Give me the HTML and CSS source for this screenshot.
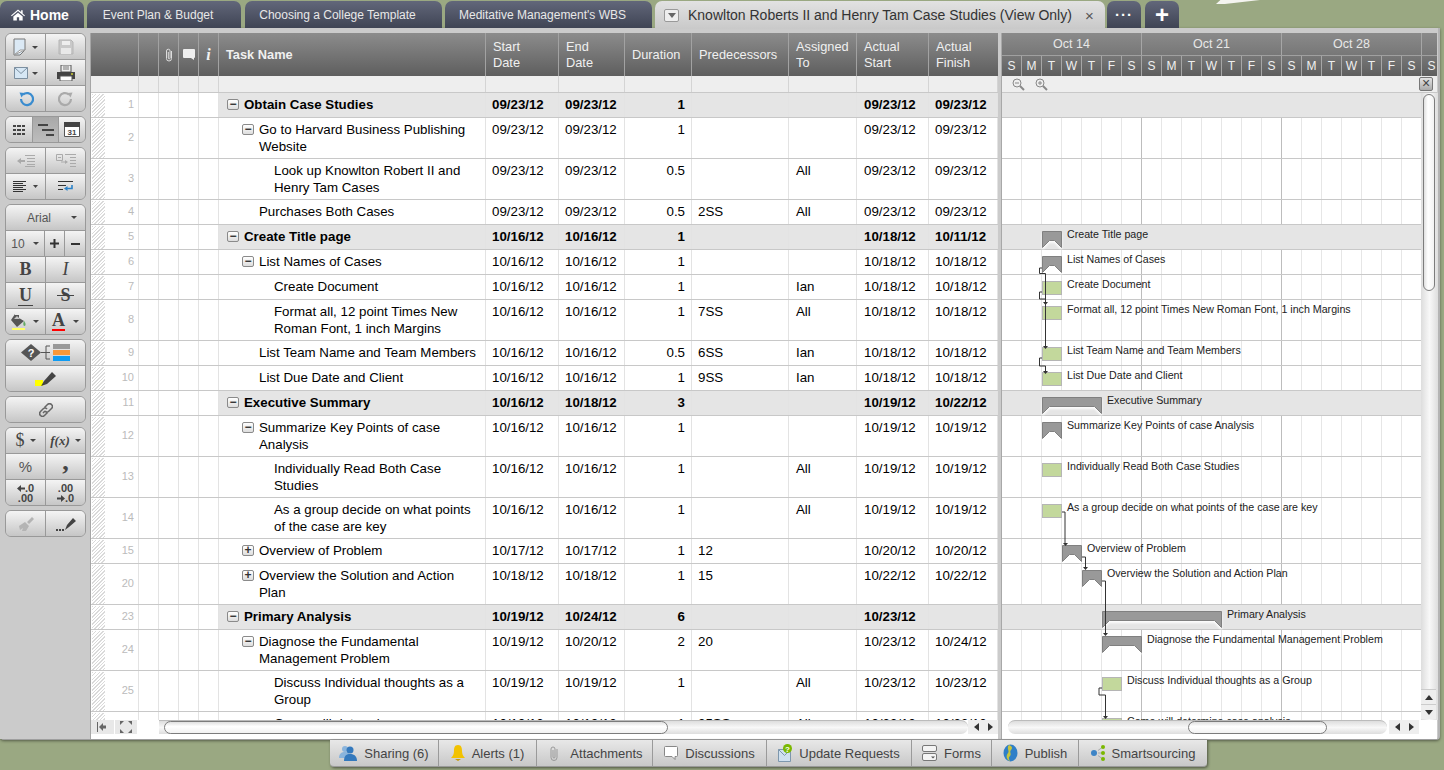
FILE: index.html
```html
<!DOCTYPE html>
<html lang="en">
<head>
<meta charset="utf-8">
<title>Knowlton Roberts II and Henry Tam Case Studies</title>
<link rel="stylesheet" href="styles.css">
</head>
<body>
<div class="corner-logo"></div>
<nav class="tabs">
  <div class="tab home"><svg width="14" height="12" viewBox="0 0 18 14"><path d="M9 0 0 7.500l1 1L9 2l8 6.500 1-1-3-2.500V1h-2v2.300zM3 9v5h4.500v-4h3v4H15V9L9 4z" fill="#fff"/></svg>Home</div>
  <div class="tab w154">Event Plan &amp; Budget</div>
  <div class="tab w197">Choosing a College Template</div>
  <div class="tab w207">Meditative Management's WBS</div>
  <div class="tab active"><span class="tab-menu"><svg width="8" height="5" viewBox="0 0 8 5"><path d="M0 0h8L4 5z" fill="#666"/></svg></span><span class="tab-title">Knowlton Roberts II and Henry Tam Case Studies (View Only)</span><span class="tab-x">×</span></div>
  <div class="tab more">···</div>
  <div class="tab plus">+</div>
</nav>

<main class="app">
  <aside class="toolbar">
    <div class="tg">
      <div class="tr">
        <div class="tb"><svg width="26" height="18" viewBox="0 0 26 18"><path d="M1 1h11v11l-5 5H1z" fill="#dbe9f5" stroke="#777"/><path d="M1 17l6-5 5 0z" fill="#fff" stroke="#999"/><path d="M19 8h6l-3 3z" fill="#444"/></svg></div>
        <div class="tb"><svg width="16" height="16" viewBox="0 0 16 16"><path d="M1 1h12l2 2v12H1z" fill="#c9c9c9" stroke="#b5b5b5"/><path d="M4 2h8v4H4z" fill="#eee"/><path d="M3 9h10v6H3z" fill="#e8e8e8"/></svg></div>
      </div>
      <div class="tr">
        <div class="tb"><svg width="24" height="12" viewBox="0 0 24 12"><path d="M.5.500h13v11H.5z" fill="#d6e7f5" stroke="#7c8fa0"/><path d="M.5.500l6.500 6 6.500-6" fill="none" stroke="#7c8fa0"/><path d="M18 5h6l-3 3z" fill="#444"/></svg></div>
        <div class="tb"><svg width="18" height="16" viewBox="0 0 18 16"><path d="M4 0h10v7H4z" fill="#eee" stroke="#555"/><path d="M6 2h6M6 4h6" stroke="#777"/><path d="M0 7h18v7H0z" fill="#444"/><path d="M3 11h12v5H3z" fill="#fff" stroke="#555"/><circle cx="15" cy="9" r="1" fill="#cc3"/></svg></div>
      </div>
      <div class="tr">
        <div class="tb"><svg width="16" height="16" viewBox="0 0 16 16"><path d="M3 8a6 6 0 1 0 2-4.400" fill="none" stroke="#3a8ccf" stroke-width="2.200"/><path d="M1.500 1.500l5 .5-3 4.500z" fill="#3a8ccf"/></svg></div>
        <div class="tb"><svg width="16" height="16" viewBox="0 0 16 16"><path d="M13 8a6 6 0 1 1-2-4.400" fill="none" stroke="#aaa" stroke-width="2.200"/><path d="M14.500 1.500l-5 .5 3 4.500z" fill="#aaa"/></svg></div>
      </div>
    </div>
    <div class="tg">
      <div class="tr">
        <div class="tb"><svg width="12" height="10" viewBox="0 0 12 10"><path d="M0 0h3v2H0zM4 0h4v2H4zM9 0h3v2H9zM0 4h3v2H0zM4 4h4v2H4zM9 4h3v2H9zM0 8h3v2H0zM4 8h4v2H4zM9 8h3v2H9z" fill="#444"/></svg></div>
        <div class="tb on"><svg width="16" height="12" viewBox="0 0 16 12"><path d="M0 0h10v2H0zM4 5h12v2H4zM8 10h8v2H8z" fill="#444"/></svg></div>
        <div class="tb"><svg width="16" height="15" viewBox="0 0 16 15"><path d="M.5 2.500h15v12H.5z" fill="#fff" stroke="#555"/><path d="M0 0h16v5H0z" fill="#444"/><text x="8" y="13" text-anchor="middle" class="ico-t">31</text></svg></div>
      </div>
    </div>
    <div class="tg">
      <div class="tr">
        <div class="tb dim"><svg width="18" height="12" viewBox="0 0 18 12"><path d="M8 .5h10M10 3.500h8M10 6.500h8M10 9.500h8M8 11.500h10" stroke="#aaa"/><path d="M0 6l4-3v2h4v2H4v2z" fill="#aaa"/></svg></div>
        <div class="tb dim"><svg width="20" height="14" viewBox="0 0 20 14"><path d="M.5.500h6v6h-6z" fill="none" stroke="#aaa"/><path d="M2 3.500h3M9 .5h11M14 3.500h6M14 6.500h6M14 9.500h6M14 12.500h6" stroke="#aaa"/><path d="M12 8l-3-2v1.500H5v1h4V10z" fill="#aaa"/></svg></div>
      </div>
      <div class="tr">
        <div class="tb"><svg width="26" height="11" viewBox="0 0 26 11"><path d="M0 .5h13M0 2.500h10M0 4.500h13M0 6.500h10M0 8.500h13M0 10.500h10" stroke="#333"/><path d="M20 4h5l-2.500 3z" fill="#444"/></svg></div>
        <div class="tb"><svg width="16" height="12" viewBox="0 0 16 12"><path d="M0 .5h15M0 4.500h8M0 8.500h5" stroke="#333"/><path d="M14 4v3.500H9" fill="none" stroke="#2a82c9" stroke-width="1.600"/><path d="M6 7.500l3.500-2.500v5z" fill="#2a82c9"/></svg></div>
      </div>
    </div>
    <div class="tg">
      <div class="tr"><div class="tb txt font">Arial<i class="dd"></i></div></div>
      <div class="tr">
        <div class="tb txt size">10<i class="dd"></i></div>
        <div class="tb half"><svg width="9" height="9" viewBox="0 0 9 9"><path d="M3.500 0h2v3.500H9v2H5.500V9h-2V5.500H0v-2h3.500z" fill="#333"/></svg></div>
        <div class="tb half"><svg width="9" height="2" viewBox="0 0 9 2"><path d="M0 0h9v2H0z" fill="#333"/></svg></div>
      </div>
      <div class="tr">
        <div class="tb serif"><b>B</b></div>
        <div class="tb serif"><em>I</em></div>
      </div>
      <div class="tr">
        <div class="tb serif"><b class="ul">U</b></div>
        <div class="tb serif"><b class="st">S</b></div>
      </div>
      <div class="tr">
        <div class="tb fill"><span class="stack"><svg width="15" height="13" viewBox="0 0 15 13"><path d="M4 0 0 6l6 7 7-6-5-3V1H4z" fill="#555"/><path d="M3 5l3-3 3 3z" fill="#c4c4c4"/><path d="M13 7c2 2 2 5 .5 5S12 9 13 7" fill="#6a6"/></svg><i class="sw yellow"></i></span><i class="dd"></i></div>
        <div class="tb fill"><span class="stack serif-a"><b>A</b><i class="sw red"></i></span><i class="dd"></i></div>
      </div>
    </div>
    <div class="tg">
      <div class="tr">
        <div class="tb"><svg width="50" height="17" viewBox="0 0 50 17"><path d="M10 0l10 8.500L10 17 0 8.500z" fill="#555"/><text x="10" y="12.500" text-anchor="middle" class="ico-q">?</text><path d="M20 8.500h6M25 2v13M25 2h4M25 8.500h4M25 15h4" stroke="#555" fill="none"/><path d="M32 0h17v5H32z" fill="#999"/><path d="M32 6h17v5H32z" fill="#f7983a"/><path d="M32 12h17v5H32z" fill="#0f9bf2"/></svg></div>
      </div>
      <div class="tr">
        <div class="tb"><svg width="22" height="16" viewBox="0 0 22 16"><path d="M0 9h8v6H0z" fill="#ff0"/><path d="M6 15l3-5 8-9 4 4-9 8z" fill="#444"/></svg></div>
      </div>
    </div>
    <div class="tg">
      <div class="tr">
        <div class="tb"><svg width="14" height="14" viewBox="0 0 14 14"><path d="M6 8 4 10M5.500 4.500l3-3a2.400 2.400 0 0 1 4 4l-3 3a2.400 2.400 0 0 1-3.500-.5M8.500 9.500l-3 3a2.400 2.400 0 0 1-4-4l3-3a2.400 2.400 0 0 1 3.500.5" fill="none" stroke="#666" stroke-width="1.500"/></svg></div>
      </div>
    </div>
    <div class="tg">
      <div class="tr">
        <div class="tb serif sm">$<i class="dd"></i></div>
        <div class="tb serif sm fx"><em>f(x)</em><i class="dd"></i></div>
      </div>
      <div class="tr">
        <div class="tb txt pct">%</div>
        <div class="tb serif sm comma"><b>,</b></div>
      </div>
      <div class="tr">
        <div class="tb deci"><span><svg width="8" height="7" viewBox="0 0 8 7"><path d="M0 3.500 4 0v2.500h4v2H4V7z" fill="#444"/></svg>.0<br>.00</span></div>
        <div class="tb deci"><span>.00<br><svg width="8" height="7" viewBox="0 0 8 7"><path d="M8 3.500 4 0v2.500H0v2h4V7z" fill="#444"/></svg>.0</span></div>
      </div>
    </div>
    <div class="tg">
      <div class="tr">
        <div class="tb"><svg width="16" height="14" viewBox="0 0 16 14"><path d="M9 5l5-5 2 2-5 5zM1 9l6-4 4 4-3 5H4l1-3-3 2z" fill="#b4b4b4"/></svg></div>
        <div class="tb"><svg width="20" height="14" viewBox="0 0 20 14"><path d="M0 12h2v2H0zM3 12h2v2H3zM6 12h2v2H6zM9 13l2-5 6-7 3 3-7 6z" fill="#444"/></svg></div>
      </div>
    </div>
  </aside>

  <section class="grid-pane">
    <div class="row head">
      <div class="c"></div><div class="c"></div>
      <div class="c ic"><svg width="8" height="14" viewBox="0 0 8 14"><path d="M6.500 3v7.500a2.500 2.500 0 0 1-5 0V3a1.800 1.800 0 0 1 3.600 0v7a.9.9 0 0 1-1.800 0V4" fill="none" stroke="#ddd"/></svg></div>
      <div class="c ic"><svg width="12" height="11" viewBox="0 0 12 11"><path d="M1 0h10a1 1 0 0 1 1 1v7a1 1 0 0 1-1 1v2L8 9H1a1 1 0 0 1-1-1V1a1 1 0 0 1 1-1" fill="#eee"/></svg></div>
      <div class="c ic info">i</div>
      <div class="c h-task">Task Name</div>
      <div class="c">Start<br>Date</div><div class="c">End<br>Date</div><div class="c">Duration</div><div class="c">Predecessors</div><div class="c">Assigned<br>To</div><div class="c">Actual<br>Start</div><div class="c">Actual<br>Finish</div>
    </div>
    <div class="row filter"><div class="c"></div><div class="c"></div><div class="c"></div><div class="c"></div><div class="c"></div><div class="c"></div><div class="c"></div><div class="c"></div><div class="c"></div><div class="c"></div><div class="c"></div><div class="c"></div><div class="c"></div></div>
    <div class="grid-body">
      <div class="row sum"><div class="c n"><i></i>1</div><div class="c"></div><div class="c"></div><div class="c"></div><div class="c"></div><div class="c task l0"><b class="tog">−</b><span>Obtain Case Studies</span></div><div class="c">09/23/12</div><div class="c">09/23/12</div><div class="c r">1</div><div class="c"></div><div class="c"></div><div class="c">09/23/12</div><div class="c">09/23/12</div></div>
      <div class="row tall"><div class="c n"><i></i>2</div><div class="c"></div><div class="c"></div><div class="c"></div><div class="c"></div><div class="c task l1"><b class="tog">−</b><span>Go to Harvard Business Publishing Website</span></div><div class="c">09/23/12</div><div class="c">09/23/12</div><div class="c r">1</div><div class="c"></div><div class="c"></div><div class="c">09/23/12</div><div class="c">09/23/12</div></div>
      <div class="row tall"><div class="c n"><i></i>3</div><div class="c"></div><div class="c"></div><div class="c"></div><div class="c"></div><div class="c task l2"><span>Look up Knowlton Robert II and Henry Tam Cases</span></div><div class="c">09/23/12</div><div class="c">09/23/12</div><div class="c r">0.5</div><div class="c"></div><div class="c">All</div><div class="c">09/23/12</div><div class="c">09/23/12</div></div>
      <div class="row"><div class="c n"><i></i>4</div><div class="c"></div><div class="c"></div><div class="c"></div><div class="c"></div><div class="c task l1n"><span>Purchases Both Cases</span></div><div class="c">09/23/12</div><div class="c">09/23/12</div><div class="c r">0.5</div><div class="c">2SS</div><div class="c">All</div><div class="c">09/23/12</div><div class="c">09/23/12</div></div>
      <div class="row sum"><div class="c n"><i></i>5</div><div class="c"></div><div class="c"></div><div class="c"></div><div class="c"></div><div class="c task l0"><b class="tog">−</b><span>Create Title page</span></div><div class="c">10/16/12</div><div class="c">10/16/12</div><div class="c r">1</div><div class="c"></div><div class="c"></div><div class="c">10/18/12</div><div class="c">10/11/12</div></div>
      <div class="row"><div class="c n"><i></i>6</div><div class="c"></div><div class="c"></div><div class="c"></div><div class="c"></div><div class="c task l1"><b class="tog">−</b><span>List Names of Cases</span></div><div class="c">10/16/12</div><div class="c">10/16/12</div><div class="c r">1</div><div class="c"></div><div class="c"></div><div class="c">10/18/12</div><div class="c">10/18/12</div></div>
      <div class="row"><div class="c n"><i></i>7</div><div class="c"></div><div class="c"></div><div class="c"></div><div class="c"></div><div class="c task l2"><span>Create Document</span></div><div class="c">10/16/12</div><div class="c">10/16/12</div><div class="c r">1</div><div class="c"></div><div class="c">Ian</div><div class="c">10/18/12</div><div class="c">10/18/12</div></div>
      <div class="row tall"><div class="c n"><i></i>8</div><div class="c"></div><div class="c"></div><div class="c"></div><div class="c"></div><div class="c task l2"><span>Format all, 12 point Times New Roman Font, 1 inch Margins</span></div><div class="c">10/16/12</div><div class="c">10/16/12</div><div class="c r">1</div><div class="c">7SS</div><div class="c">All</div><div class="c">10/18/12</div><div class="c">10/18/12</div></div>
      <div class="row"><div class="c n"><i></i>9</div><div class="c"></div><div class="c"></div><div class="c"></div><div class="c"></div><div class="c task l1n"><span>List Team Name and Team Members</span></div><div class="c">10/16/12</div><div class="c">10/16/12</div><div class="c r">0.5</div><div class="c">6SS</div><div class="c">Ian</div><div class="c">10/18/12</div><div class="c">10/18/12</div></div>
      <div class="row"><div class="c n"><i></i>10</div><div class="c"></div><div class="c"></div><div class="c"></div><div class="c"></div><div class="c task l1n"><span>List Due Date and Client</span></div><div class="c">10/16/12</div><div class="c">10/16/12</div><div class="c r">1</div><div class="c">9SS</div><div class="c">Ian</div><div class="c">10/18/12</div><div class="c">10/18/12</div></div>
      <div class="row sum"><div class="c n"><i></i>11</div><div class="c"></div><div class="c"></div><div class="c"></div><div class="c"></div><div class="c task l0"><b class="tog">−</b><span>Executive Summary</span></div><div class="c">10/16/12</div><div class="c">10/18/12</div><div class="c r">3</div><div class="c"></div><div class="c"></div><div class="c">10/19/12</div><div class="c">10/22/12</div></div>
      <div class="row tall"><div class="c n"><i></i>12</div><div class="c"></div><div class="c"></div><div class="c"></div><div class="c"></div><div class="c task l1"><b class="tog">−</b><span>Summarize Key Points of case Analysis</span></div><div class="c">10/16/12</div><div class="c">10/16/12</div><div class="c r">1</div><div class="c"></div><div class="c"></div><div class="c">10/19/12</div><div class="c">10/19/12</div></div>
      <div class="row tall"><div class="c n"><i></i>13</div><div class="c"></div><div class="c"></div><div class="c"></div><div class="c"></div><div class="c task l2"><span>Individually Read Both Case Studies</span></div><div class="c">10/16/12</div><div class="c">10/16/12</div><div class="c r">1</div><div class="c"></div><div class="c">All</div><div class="c">10/19/12</div><div class="c">10/19/12</div></div>
      <div class="row tall"><div class="c n"><i></i>14</div><div class="c"></div><div class="c"></div><div class="c"></div><div class="c"></div><div class="c task l2"><span>As a group decide on what points of the case are key</span></div><div class="c">10/16/12</div><div class="c">10/16/12</div><div class="c r">1</div><div class="c"></div><div class="c">All</div><div class="c">10/19/12</div><div class="c">10/19/12</div></div>
      <div class="row"><div class="c n"><i></i>15</div><div class="c"></div><div class="c"></div><div class="c"></div><div class="c"></div><div class="c task l1"><b class="tog">+</b><span>Overview of Problem</span></div><div class="c">10/17/12</div><div class="c">10/17/12</div><div class="c r">1</div><div class="c">12</div><div class="c"></div><div class="c">10/20/12</div><div class="c">10/20/12</div></div>
      <div class="row tall"><div class="c n"><i></i>20</div><div class="c"></div><div class="c"></div><div class="c"></div><div class="c"></div><div class="c task l1"><b class="tog">+</b><span>Overview the Solution and Action Plan</span></div><div class="c">10/18/12</div><div class="c">10/18/12</div><div class="c r">1</div><div class="c">15</div><div class="c"></div><div class="c">10/22/12</div><div class="c">10/22/12</div></div>
      <div class="row sum"><div class="c n"><i></i>23</div><div class="c"></div><div class="c"></div><div class="c"></div><div class="c"></div><div class="c task l0"><b class="tog">−</b><span>Primary Analysis</span></div><div class="c">10/19/12</div><div class="c">10/24/12</div><div class="c r">6</div><div class="c"></div><div class="c"></div><div class="c">10/23/12</div><div class="c"></div></div>
      <div class="row tall"><div class="c n"><i></i>24</div><div class="c"></div><div class="c"></div><div class="c"></div><div class="c"></div><div class="c task l1"><b class="tog">−</b><span>Diagnose the Fundamental Management Problem</span></div><div class="c">10/19/12</div><div class="c">10/20/12</div><div class="c r">2</div><div class="c">20</div><div class="c"></div><div class="c">10/23/12</div><div class="c">10/24/12</div></div>
      <div class="row tall"><div class="c n"><i></i>25</div><div class="c"></div><div class="c"></div><div class="c"></div><div class="c"></div><div class="c task l2"><span>Discuss Individual thoughts as a Group</span></div><div class="c">10/19/12</div><div class="c">10/19/12</div><div class="c r">1</div><div class="c"></div><div class="c">All</div><div class="c">10/23/12</div><div class="c">10/23/12</div></div>
      <div class="row tall"><div class="c n"><i></i>26</div><div class="c"></div><div class="c"></div><div class="c"></div><div class="c"></div><div class="c task l2"><span>Come will determine case analysis</span></div><div class="c">10/19/12</div><div class="c">10/19/12</div><div class="c r">1</div><div class="c">25SS</div><div class="c">All</div><div class="c">10/23/12</div><div class="c">10/23/12</div></div>
    </div>
    <div class="hscroll">
      <div class="nav-btn"><svg width="10" height="10" viewBox="0 0 10 10"><path d="M.5 0v10" stroke="#666"/><path d="M2 5l4-4v2.500h3v3H6V9z" fill="#666"/></svg></div>
      <div class="nav-btn"><svg width="12" height="12" viewBox="0 0 12 12"><path d="M0 0h4L0 4zM12 0H8l4 4zM0 12h4l-4-4zM12 12H8l4-4z" fill="#666"/></svg></div>
      <div class="track t-grid"><div class="thumb"></div></div>
      <div class="arrows"><i class="al"></i><i class="ar"></i></div>
    </div>
  </section>

  <section class="gantt-pane">
    <div class="g-months"><div>Oct 14</div><div>Oct 21</div><div>Oct 28</div><div class="rest"></div></div>
    <div class="g-days"><div>S</div><div>M</div><div>T</div><div>W</div><div>T</div><div>F</div><div>S</div><div>S</div><div>M</div><div>T</div><div>W</div><div>T</div><div>F</div><div>S</div><div>S</div><div>M</div><div>T</div><div>W</div><div>T</div><div>F</div><div>S</div><div>S</div></div>
    <div class="g-filter">
      <svg width="13" height="13" viewBox="0 0 13 13"><circle cx="5" cy="5" r="4" fill="none" stroke="#888"/><path d="M3 5h4" stroke="#888"/><path d="M8 8l4 4" stroke="#888" stroke-width="2"/></svg>
      <svg width="13" height="13" viewBox="0 0 13 13"><circle cx="5" cy="5" r="4" fill="none" stroke="#888"/><path d="M3 5h4M5 3v4" stroke="#888"/><path d="M8 8l4 4" stroke="#888" stroke-width="2"/></svg>
      <span class="g-close">×</span>
    </div>
    <div class="g-main">
      <div class="g-body">
        <div class="gr sum"></div>
        <div class="gr tall"></div>
        <div class="gr tall"></div>
        <div class="gr"></div>
        <div class="gr sum"><span style="left:65px">Create Title page</span></div>
        <div class="gr"><span style="left:65px">List Names of Cases</span></div>
        <div class="gr"><span style="left:65px">Create Document</span></div>
        <div class="gr tall"><span style="left:65px">Format all, 12 point Times New Roman Font, 1 inch Margins</span></div>
        <div class="gr"><span style="left:65px">List Team Name and Team Members</span></div>
        <div class="gr"><span style="left:65px">List Due Date and Client</span></div>
        <div class="gr sum"><span style="left:105px">Executive Summary</span></div>
        <div class="gr tall"><span style="left:65px">Summarize Key Points of case Analysis</span></div>
        <div class="gr tall"><span style="left:65px">Individually Read Both Case Studies</span></div>
        <div class="gr tall"><span style="left:65px">As a group decide on what points of the case are key</span></div>
        <div class="gr"><span style="left:85px">Overview of Problem</span></div>
        <div class="gr tall"><span style="left:105px">Overview the Solution and Action Plan</span></div>
        <div class="gr sum"><span style="left:225px">Primary Analysis</span></div>
        <div class="gr tall"><span style="left:145px">Diagnose the Fundamental Management Problem</span></div>
        <div class="gr tall"><span style="left:125px">Discuss Individual thoughts as a Group</span></div>
        <div class="gr tall"><span style="left:125px">Come will determine case analysis</span></div>
        <svg class="g-bars" width="419" height="627" viewBox="1002 92 419 627">
          <g class="sumbar">
            <path d="M1042.500 230.500h19v16l-7-7h-5l-7 7z"/>
            <path d="M1042.500 255.500h19v16l-7-7h-5l-7 7z"/>
            <path d="M1042.500 396.500h59v16l-7-7h-45l-7 7z"/>
            <path d="M1042.500 421.500h19v16l-7-7h-5l-7 7z"/>
            <path d="M1062.500 544.500h19v16l-7-7h-5l-7 7z"/>
            <path d="M1082.500 569.500h19v16l-7-7h-5l-7 7z"/>
            <path d="M1102.500 610.500h119v16l-7-7h-105l-7 7z"/>
            <path d="M1102.500 635.500h39v16l-7-7h-25l-7 7z"/>
          </g>
          <g class="greenbar">
            <rect x="1042.500" y="280.500" width="19" height="13"/>
            <rect x="1042.500" y="305.500" width="19" height="13"/>
            <rect x="1042.500" y="346.500" width="19" height="13"/>
            <rect x="1042.500" y="371.500" width="19" height="13"/>
            <rect x="1042.500" y="462.500" width="19" height="13"/>
            <rect x="1042.500" y="503.500" width="19" height="13"/>
            <rect x="1102.500" y="676.500" width="19" height="13"/>
            <rect x="1102.500" y="717.500" width="19" height="13"/>
          </g>
          <g class="links">
            <path d="M1042 267h-2.500v5.500h6V345M1042 291h-2.500v7h6M1042 357h-2.500v8h6v5M1062 511h3v32M1082 556h3.500v12M1102 580h3.500v54M1102 687h-3v7h6.500v22"/>
          </g>
          <g class="heads">
            <path d="M1043 301h5l-2.500 3zM1043 345h5l-2.500 3zM1043 370h5l-2.500 3zM1063 542h5l-2.500 3zM1083 566h5l-2.500 3zM1103 632h5l-2.500 3zM1103 715h5l-2.500 3z"/>
          </g>
        </svg>
      </div>
      <div class="vscroll">
        <div class="v-thumb"></div>
        <div class="v-arrow"><i class="au"></i></div>
        <div class="v-arrow"><i class="ad"></i></div>
      </div>
    </div>
    <div class="hscroll g">
      <div class="track t-gantt"><div class="thumb"></div></div>
      <div class="arrows"><i class="al"></i><i class="ar"></i></div>
      <div class="corner"></div>
    </div>
  </section>
</main>

<footer class="bottom">
  <div class="bt w109"><svg width="18" height="16" viewBox="0 0 18 16"><circle cx="6" cy="4" r="3" fill="#8ab4dc"/><path d="M0 13c0-5 3-6 6-6s5 1 5 6z" fill="#8ab4dc"/><circle cx="11" cy="5" r="3.500" fill="#3479bd"/><path d="M5 16c0-6 3-7 6-7s7 1 7 7z" fill="#3479bd"/></svg>Sharing (6)</div>
  <div class="bt w98"><svg width="14" height="16" viewBox="0 0 14 16"><path d="M7 0c3.500 0 4 3 4 6s1 5 3 7H0c2-2 3-4 3-7s.5-6 4-6" fill="#f2c200"/><path d="M4 14h6l-3 2z" fill="#c89a00"/></svg>Alerts (1)</div>
  <div class="bt w116 wide"><svg width="8" height="15" viewBox="0 0 8 15"><path d="M7 3v8.500a3 3 0 0 1-6 0V3a2 2 0 0 1 4 0v8a1 1 0 0 1-2 0V4" fill="none" stroke="#999"/></svg>Attachments</div>
  <div class="bt w114"><svg width="14" height="14" viewBox="0 0 14 14"><path d="M1.500.5h11a1 1 0 0 1 1 1v8a1 1 0 0 1-1 1H11v3l-3-3H1.500a1 1 0 0 1-1-1v-8a1 1 0 0 1 1-1z" fill="#fff" stroke="#888"/></svg>Discussions</div>
  <div class="bt w145"><svg width="14" height="18" viewBox="0 0 14 18"><path d="M.5 5.500h12v12H.5z" fill="#cfe0ef" stroke="#7d97ad"/><path d="M.5 5.500l6 6 6-6" fill="none" stroke="#7d97ad"/><circle cx="9.500" cy="4.500" r="4.500" fill="#7ab800"/><text x="9.500" y="7.500" text-anchor="middle" class="ico-b">?</text></svg>Update Requests</div>
  <div class="bt w80"><svg width="15" height="16" viewBox="0 0 15 16"><rect x=".5" y=".5" width="14" height="6" rx="1.500" fill="#f4f4f4" stroke="#777"/><rect x=".5" y="8.500" width="14" height="7" rx="1.500" fill="#f4f4f4" stroke="#777"/><path d="M9 11.500h4l-2 2z" fill="#555"/></svg>Forms</div>
  <div class="bt w87"><svg width="15" height="18" viewBox="0 0 15 18"><ellipse cx="7.500" cy="9" rx="7" ry="8.500" fill="#2f7fc8"/><path d="M6 1c3 1 4 3 2 5s1 4-1 6-1 3 0 5C3 16 3 11 5 9S3 4 6 1" fill="#c6c53e"/></svg>Publish</div>
  <div class="bt w127"><svg width="14" height="16" viewBox="0 0 14 16"><circle cx="3" cy="8" r="3" fill="#3d84c6"/><path d="M7 5.500l4-3M7 8h4M7 10.500l4 3" stroke="#aaa"/><circle cx="12" cy="2" r="2" fill="#7ab800"/><circle cx="12" cy="8" r="2" fill="#7ab800"/><circle cx="12" cy="14" r="2" fill="#7ab800"/></svg>Smartsourcing</div>
</footer>
</body>
</html>
```
FILE: styles.css
```css
* { box-sizing: border-box; }
html, body { margin: 0; height: 100%; overflow: hidden; }
body {
  position: relative;
  background: #9aa882;
  font-family: "Liberation Sans", Arial, sans-serif;
  font-size: 13.3px;
  color: #000;
}
.corner-logo {
  position: absolute;
  left: 1216px;
  top: 0;
  width: 44px;
  height: 4px;
  background: #f4f4f0;
  clip-path: polygon(0 100%, 10% 0, 100% 0, 20% 100%);
}

/* top tabs */
.tabs { display: flex; height: 28px; padding-top: 1px; }
.tab {
  display: flex;
  align-items: center;
  justify-content: center;
  height: 27px;
  margin-right: 3px;
  padding-right: 12px;
  border-radius: 7px 7px 0 0;
  background: linear-gradient(#62677a, #3f4454);
  color: #e8e8e8;
  font-size: 12px;
  white-space: nowrap;
}
.home { width: 84px; justify-content: flex-start; padding: 0 0 0 11px; gap: 5px; font-size: 14px; font-weight: bold; color: #fff; }
.w154 { width: 154px; margin-right: 4px; }
.w197 { width: 197px; }
.w207 { width: 207px; }
.active {
  width: 450px;
  height: 28px;
  margin-right: 2px;
  justify-content: flex-start;
  padding: 0 0 0 9px;
  background: linear-gradient(#e2e2e2, #c9c9c9);
  color: #333;
  font-size: 14px;
}
.tab-menu {
  display: flex;
  align-items: center;
  justify-content: center;
  width: 15px;
  height: 13px;
  margin-right: 9px;
  border: 1px solid #999;
  border-radius: 2px;
  background: #eee;
}
.tab-title { width: 397px; }
.tab-x { font-size: 15px; color: #555; }
.more { width: 34px; margin-right: 4px; padding: 0; font-weight: bold; font-size: 15px; letter-spacing: 1px; color: #fff; }
.plus { width: 34px; padding: 0; font-weight: bold; font-size: 24px; color: #fff; }

/* app frame */
.app {
  display: flex;
  width: 1440px;
  height: 712px;
  padding-top: 5px;
  background: #cbcbcb;
  border-right: 2px solid #b4b4b4;
  border-bottom: 1px solid #9f9f9f;
  border-radius: 0 0 4px 4px;
  box-shadow: 0 1px 3px rgba(0,0,0,.45);
}

/* left toolbar */
.toolbar {
  flex: none;
  width: 91px;
  padding-left: 5px;
  border-right: 1px solid #a6a6a6;
  background: #cbcbcb;
}
.tg {
  width: 81px;
  margin-bottom: 4px;
  border: 1px solid #999;
  border-radius: 6px;
  overflow: hidden;
}
.tr { display: flex; height: 26px; border-bottom: 1px solid #999; }
.tr:last-child { height: 25px; border-bottom: 0; }
.tb {
  display: flex;
  flex: 1 1 0;
  align-items: center;
  justify-content: center;
  gap: 5px;
  min-width: 0;
  border-right: 1px solid #999;
  background: linear-gradient(#f4f4f4, #c6c6c6);
  color: #444;
}
.tb:last-child { border-right: 0; }
.tb.on { background: linear-gradient(#a8a8a8, #bdbdbd); }
.half { flex: 0 0 20px; }
.txt { font-size: 12px; color: #555; }
.font { justify-content: flex-start; padding-left: 21px; gap: 20px; }
.size { gap: 8px; }
.pct { font-size: 15px; }
.serif, .serif-a { font-family: "Liberation Serif", serif; font-size: 18px; color: #444; }
.serif em { font-style: italic; }
.sm { font-size: 18px; }
.fx { font-size: 13px; font-weight: bold; }
.comma { font-size: 26px; padding-bottom: 10px; }
.ul { position: relative; }
.ul::after {
  content: "";
  position: absolute;
  left: -1px;
  right: -1px;
  bottom: 0;
  height: 1px;
  background: #444;
}
.st { position: relative; }
.st::after {
  content: "";
  position: absolute;
  left: -3px;
  right: -3px;
  top: 10px;
  height: 1px;
  background: #444;
}
.deci { font-size: 11px; line-height: 10px; text-align: center; color: #444; font-weight: bold; }
.dd {
  display: inline-block;
  width: 0;
  height: 0;
  border-style: solid;
  border-width: 3px 3.500px 0;
  border-color: #444 transparent transparent;
}
.fill { gap: 8px; }
.stack { display: flex; flex-direction: column; align-items: center; width: 13px; }
.serif-a { line-height: 15px; font-size: 18px; }
.sw { display: block; width: 13px; height: 2px; margin-top: 1px; }
.yellow { background: #ffff66; }
.red { background: #f00; }
.ico-t { font: bold 8px "Liberation Sans", sans-serif; fill: #444; }
.ico-q { font: bold 11px "Liberation Sans", sans-serif; fill: #fff; }
.ico-b { font: bold 8px "Liberation Sans", sans-serif; fill: #fff; }

/* shared row grid */
.grid-pane { flex: none; width: 907px; background: #fff; }
.row {
  display: grid;
  grid-template-columns: 48px 20px 20px 20px 20px 267px 73px 66px 67px 97px 68px 72px 69px;
  height: 25px;
  border-bottom: 1px solid #c8c8c8;
  background: #fff;
}
.row.tall { height: 41px; }
.c {
  position: relative;
  padding: 3px 6px 0;
  border-right: 1px solid #e3e3e3;
  line-height: 17px;
  white-space: nowrap;
  overflow: hidden;
}
.c:nth-child(11), .c:nth-child(12) { padding-left: 7px; }
.r { text-align: right; padding-right: 6px; }
.sum { font-weight: bold; }
.sum .c:nth-child(n+6) { background: #e5e5e5; }

.n {
  display: flex;
  align-items: center;
  justify-content: flex-end;
  padding: 0 4px 2px 0;
  font-size: 11px;
  font-weight: normal;
  color: #bbb;
}
.n i {
  position: absolute;
  left: 1px;
  top: 1px;
  bottom: 0;
  width: 13px;
  background: repeating-linear-gradient(135deg, #dadada 0 1px, #fff 1px 2.500px);
}
.task { display: flex; white-space: normal; padding-right: 8px; }
.task span { display: block; }
.l0 { padding-left: 8px; }
.l1 { padding-left: 23px; }
.l1n { padding-left: 40px; }
.l2 { padding-left: 55px; }
.tog {
  flex: none;
  width: 12px;
  height: 11px;
  margin: 3px 5px 0 0;
  border: 1px solid #8a8a8a;
  border-radius: 2px;
  background: linear-gradient(#fff, #ddd);
  color: #333;
  font-size: 12px;
  font-weight: bold;
  line-height: 8px;
  text-align: center;
}

.head {
  height: 43px;
  border: 0;
  background: linear-gradient(#8c8c8c, #5e5e5e);
}
.head .c {
  display: flex;
  align-items: center;
  padding: 0 7px;
  background: none;
  border-right: 1px solid #a2a2a2;
  color: #f0f0f0;
  font-size: 12.8px;
  line-height: 16px;
}
.head .c:last-child { border-right: 0; }
.head .ic { justify-content: center; padding: 0; }
.head .info { font: italic bold 16px "Liberation Serif", serif; }
.h-task { font-weight: bold; }
.filter { height: 17px; background: #eee; }
.filter .c { padding: 0; border-right-color: #d4d4d4; }
.grid-body { height: 627px; overflow: hidden; }

/* horizontal scroll bars */
.hscroll { display: flex; height: 14px; background: #fff; }
.hscroll .nav-btn {
  display: flex;
  flex: none;
  align-items: center;
  justify-content: center;
  width: 23.500px;
  height: 14px;
  background: #e8e8e8;
  border-right: 1px solid #fff;
}
.track {
  position: relative;
  height: 14px;
  border-top: 1px solid #bbb;
  border-radius: 0 7px 7px 0;
  background: linear-gradient(#ddd, #f8f8f8 50%, #ddd);
}
.t-grid { width: 810px; margin-left: 21px; }
.t-gantt { width: 380px; margin-left: 6px; border-radius: 7px; }
.thumb {
  position: absolute;
  top: 0;
  height: 13px;
  border: 1px solid #7c7c7c;
  border-radius: 7px;
  background: linear-gradient(#e0e0e0, #fff 40%, #f2f2f2);
}
.t-grid .thumb { left: 5px; width: 504px; }
.t-gantt .thumb { left: 180px; width: 139px; }
.arrows { display: flex; flex: none; width: 30px; align-items: center; background: #eee; height: 14px; }
.arrows i { display: block; width: 0; height: 0; border-style: solid; margin-left: 6px; }
.al { border-width: 4px 5px 4px 0; border-color: transparent #333 transparent transparent; }
.ar { border-width: 4px 0 4px 5px; border-color: transparent transparent transparent #333; margin-left: 9px !important; }
.hscroll.g .arrows { margin-left: 2px; }
.corner { flex: none; width: 18px; height: 14px; background: #fff; }

/* gantt */
.gantt-pane { flex: none; width: 436px; margin-left: 3px; border-left: 1px solid #a8a8a8; background: #fff; }
.g-months {
  display: grid;
  grid-template-columns: 140px 140px 140px 1fr;
  height: 22px;
  background: linear-gradient(#8a8a8a, #777);
  color: #e8e8e8;
  text-align: center;
  line-height: 22px;
  font-size: 12.5px;
}
.g-months div { border-right: 1px solid #a6a6a6; }
.g-months .rest { border: 0; }
.g-days {
  display: grid;
  grid-template-columns: repeat(22, 20px);
  height: 21px;
  overflow: hidden;
  background: linear-gradient(#777, #5e5e5e);
  color: #f0f0f0;
  text-align: center;
  line-height: 20px;
  font-size: 12px;
  border-top: 1px solid #a0a0a0;
}
.g-days div { border-right: 1px solid #a6a6a6; }
.g-filter {
  display: flex;
  align-items: center;
  gap: 10px;
  height: 17px;
  padding-left: 10px;
  background: #eee;
  border-bottom: 1px solid #c8c8c8;
}
.g-close {
  width: 14px;
  height: 14px;
  margin-left: auto;
  margin-right: 4px;
  border: 1px solid #777;
  border-radius: 2px;
  background: linear-gradient(#e4e4e4, #aaa);
  font-size: 14px;
  line-height: 11px;
  text-align: center;
  color: #444;
}
.g-main { display: flex; height: 627px; }
.g-body { position: relative; flex: none; width: 419px; overflow: hidden; }
.gr {
  position: relative;
  height: 25px;
  border-bottom: 1px solid #c8c8c8;
  background:
    repeating-linear-gradient(90deg, transparent 0 139px, #bdbdbd 139px 140px),
    repeating-linear-gradient(90deg, transparent 0 19px, #e6e6e6 19px 20px),
    #fff;
}
.gr.tall { height: 41px; }
.gr.sum { background: #e5e5e5; }
.gr span {
  position: absolute;
  top: 2px;
  font-size: 10.67px;
  font-weight: normal;
  line-height: 14px;
  color: #222;
  white-space: nowrap;
  z-index: 1;
}
.g-bars { position: absolute; left: 0; top: 0; }
.sumbar { filter: drop-shadow(0 2px 1px rgba(255,255,255,.9)); }
.sumbar path { fill: #999; stroke: #808080; }
.greenbar rect { fill: #c3d89c; stroke: #b5b5b5; }
.links path { fill: none; stroke: #333; }
.heads path { fill: #333; }

.vscroll {
  display: flex;
  flex: none;
  flex-direction: column;
  width: 17px;
  padding-left: 2px;
  background: linear-gradient(90deg, #ddd, #f8f8f8 50%, #ddd);
}
.v-thumb {
  width: 12px;
  height: 197px;
  margin: 1px 0 398px 0;
  border: 1px solid #7c7c7c;
  border-radius: 7px;
  background: linear-gradient(90deg, #e0e0e0, #fff 40%, #f2f2f2);
}
.v-arrow {
  display: flex;
  align-items: center;
  justify-content: center;
  width: 15px;
  height: 15px;
  margin-left: -2px;
  background: #eee;
  border-top: 1px solid #ccc;
}
.v-arrow i { display: block; width: 0; height: 0; border-style: solid; }
.au { border-width: 0 4px 5px; border-color: transparent transparent #333; }
.ad { border-width: 5px 4px 0; border-color: #333 transparent transparent; }

/* bottom tabs */
.bottom {
  position: relative;
  display: flex;
  width: 877px;
  height: 27px;
  margin-left: 330px;
  border-radius: 0 0 4px 4px;
  background: linear-gradient(#e8e8e8, #c8c8c8);
  border-bottom: 1px solid #999;
  box-shadow: 1px 1px 3px rgba(0,0,0,.5);
  font-size: 13px;
}
.bt {
  display: flex;
  align-items: center;
  justify-content: center;
  gap: 7px;
  border-right: 1px solid #9a9a9a;
  color: #444;
  white-space: nowrap;
}
.bt:last-child { border-right: 0; }
.wide { gap: 12px; padding-left: 4px; }
.w109 { width: 109px; }
.w98 { width: 98px; }
.w116 { width: 116px; }
.w114 { width: 114px; }
.w145 { width: 145px; }
.w80 { width: 80px; }
.w87 { width: 87px; }
.w127 { width: 128px; }
```
